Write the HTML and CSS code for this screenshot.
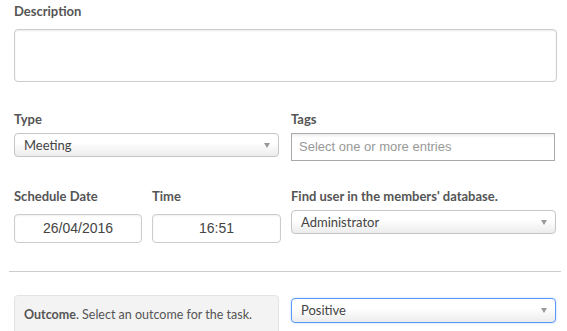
FILE: index.html
```html
<!DOCTYPE html>
<html lang="en">
<head>
    <meta charset="UTF-8">
    <title>Task form</title>
    <link rel="stylesheet" href="styles.css">
</head>
<body>
    <div class="form">
        <div class="field">
            <label class="label">Description</label>
            <div class="textarea"></div>
        </div>

        <div class="row">
            <div class="field">
                <label class="label">Type</label>
                <div class="select">Meeting<span class="arrow"></span></div>
            </div>
            <div class="field">
                <label class="label">Tags</label>
                <div class="tags">Select one or more entries</div>
            </div>
        </div>

        <div class="row schedule-row">
            <div class="dates">
                <div class="field">
                    <label class="label">Schedule Date</label>
                    <div class="input">26/04/2016</div>
                </div>
                <div class="field">
                    <label class="label">Time</label>
                    <div class="input">16:51</div>
                </div>
            </div>
            <div class="field">
                <label class="label">Find user in the members' database.</label>
                <div class="select">Administrator<span class="arrow"></span></div>
            </div>
        </div>

        <hr class="divider">

        <div class="row outcome-row">
            <div class="note"><b>Outcome</b>. Select an outcome for the task.</div>
            <div class="field">
                <div class="select focus">Positive<span class="arrow"></span></div>
            </div>
        </div>
    </div>
</body>
</html>
```

FILE: styles.css
```css
body {
    margin: 0;
    background: #fff;
    font-family: Lato, "Noto Sans", Arial, sans-serif;
    color: #555;
    overflow: hidden;
}

.form {
    padding: 3px 10px 0 14px;
}

.label {
    display: block;
    font-size: 13px;
    font-weight: bold;
    color: #555;
    line-height: 16px;
    margin-bottom: 10px;
}

.textarea {
    width: 541px;
    height: 51px;
    border: 1px solid #ccc;
    border-radius: 4px;
    box-shadow: inset 0 1px 2px rgba(0, 0, 0, 0.08);
}

.row {
    display: grid;
    grid-template-columns: 265px 265px;
    column-gap: 12px;
    margin-top: 29px;
}

.schedule-row {
    margin-top: 27px;
}

.select {
    position: relative;
    height: 22px;
    line-height: 22px;
    border: 1px solid #c5c5c5;
    border-radius: 4px;
    background: linear-gradient(#fff 40%, #ececec);
    font-size: 13px;
    color: #444;
    padding-left: 9px;
    margin-top: -4px;
}

.select.focus {
    height: 23px;
    line-height: 23px;
    margin-top: 0;
    border-color: #5897fb;
    box-shadow: 0 0 3px rgba(88, 151, 251, 0.35);
}

.arrow {
    position: absolute;
    right: 8px;
    top: 9px;
    border-left: 3px solid transparent;
    border-right: 3px solid transparent;
    border-top: 5px solid #999;
}

.tags {
    height: 26px;
    line-height: 26px;
    border: 1px solid #aaa;
    background: linear-gradient(#eee, #fff 15%);
    font-family: "Liberation Sans", Arial, sans-serif;
    font-size: 13px;
    color: #999;
    padding-left: 7px;
    margin-top: -4px;
    width: 255px;
}

.dates {
    display: grid;
    grid-template-columns: 128px 129px;
    column-gap: 10px;
}

.input {
    height: 27px;
    line-height: 27px;
    margin-top: 2px;
    border: 1px solid #ccc;
    border-radius: 4px;
    text-align: center;
    font-family: "Liberation Sans", Arial, sans-serif;
    font-size: 14px;
    color: #444;
    box-shadow: inset 0 1px 2px rgba(0, 0, 0, 0.06);
}

.divider {
    border: 0;
    border-top: 1px solid #ccc;
    margin: 28px -4px 0 -5px;
}

.outcome-row {
    margin-top: 23px;
}

.note {
    height: 40px;
    background: #f3f3f3;
    border: 1px solid #e3e3e3;
    border-radius: 4px;
    font-size: 12.5px;
    color: #555;
    padding: 11px 9px 0;
    box-sizing: border-box;
    white-space: nowrap;
}

.outcome-row .field {
    padding-top: 3px;
}
```
